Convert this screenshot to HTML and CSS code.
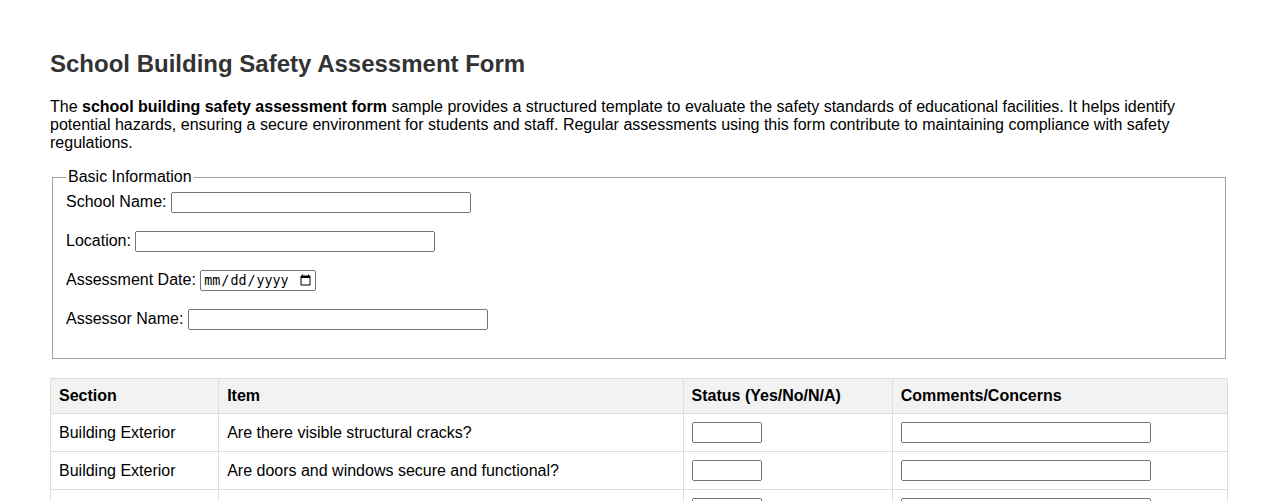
FILE: index.html
```html
<!DOCTYPE html>
<html lang="en">
<head>
<meta charset="utf-8">
<title>School Building Safety Assessment Form</title>
<link rel="stylesheet" href="styles.css">
</head>
<body>
<div class="page">
  <h1 class="title">School Building Safety Assessment Form</h1>
  <p class="intro">The <strong>school building safety assessment form</strong> sample provides a structured template to evaluate the safety standards of educational facilities. It helps identify potential hazards, ensuring a secure environment for students and staff. Regular assessments using this form contribute to maintaining compliance with safety regulations.</p>
  <form>
    <fieldset class="basic">
      <legend>Basic Information</legend>
      <div class="field"><label for="school">School Name:</label> <input type="text" id="school" class="wide"></div>
      <div class="field"><label for="loc">Location:</label> <input type="text" id="loc" class="wide"></div>
      <div class="field"><label for="date">Assessment Date:</label> <input type="date" id="date" class="date"></div>
      <div class="field"><label for="assessor">Assessor Name:</label> <input type="text" id="assessor" class="wide"></div>
    </fieldset>
    <table class="checklist">
      <thead>
        <tr>
          <th class="c-section">Section</th>
          <th class="c-item">Item</th>
          <th class="c-status">Status (Yes/No/N/A)</th>
          <th class="c-comments">Comments/Concerns</th>
        </tr>
      </thead>
      <tbody>
        <tr>
          <td>Building Exterior</td>
          <td>Are there visible structural cracks?</td>
          <td><input type="text" class="status"></td>
          <td><input type="text" class="comments"></td>
        </tr>
        <tr>
          <td>Building Exterior</td>
          <td>Are doors and windows secure and functional?</td>
          <td><input type="text" class="status"></td>
          <td><input type="text" class="comments"></td>
        </tr>
        <tr>
          <td>Building Exterior</td>
          <td>Are walkways and entrances free of hazards?</td>
          <td><input type="text" class="status"></td>
          <td><input type="text" class="comments"></td>
        </tr>
      </tbody>
    </table>
  </form>
</div>
</body>
</html>
```

FILE: styles.css
```css
body {
  margin: 0;
  font-family: "Liberation Sans", Arial, sans-serif;
  font-size: 16px;
  color: #000;
  background: #fff;
}

.page {
  padding: 50px 50px;
}

.title {
  font-size: 24px;
  font-weight: bold;
  color: #333;
  margin: 0 0 20px;
}

.intro {
  margin: 16px 0 16px;
}

.basic {
  margin: 0 2px;
  padding: 6px 13px 10px;
  border: 1px solid #a0a0a0;
}

.basic legend {
  padding: 0 2px;
}

.field {
  margin-bottom: 18px;
}

input.wide {
  width: 300px;
  box-sizing: border-box;
}

input.date {
  width: 116px;
  box-sizing: border-box;
}

.checklist {
  margin-top: 19px;
  width: 100%;
  border-collapse: collapse;
}

.checklist th,
.checklist td {
  border: 1px solid #ddd;
  padding: 8px;
  text-align: left;
}

.checklist th {
  background: #f2f2f2;
  font-weight: bold;
}

.c-section { width: 151px; }
.c-item { width: 447px; }
.c-status { width: 192px; }
.c-comments { width: 318px; }

input.status {
  width: 70px;
  box-sizing: border-box;
}

input.comments {
  width: 250px;
  box-sizing: border-box;
}
```
